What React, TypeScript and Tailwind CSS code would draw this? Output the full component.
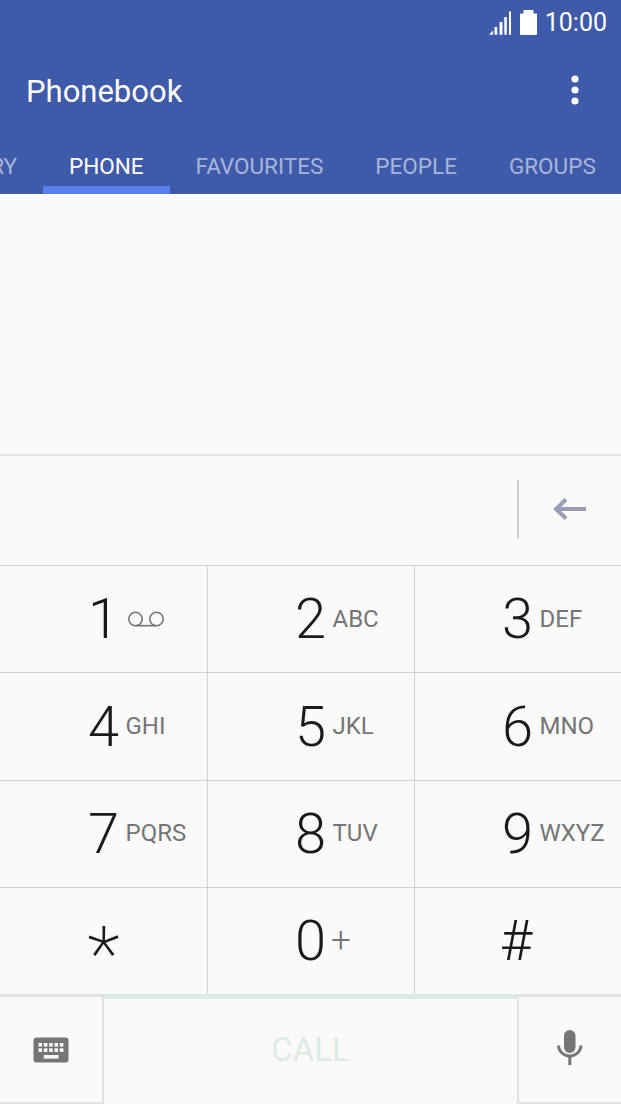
import React from "react";

const keys = [
  { digit: "1", sub: "" },
  { digit: "2", sub: "ABC" },
  { digit: "3", sub: "DEF" },
  { digit: "4", sub: "GHI" },
  { digit: "5", sub: "JKL" },
  { digit: "6", sub: "MNO" },
  { digit: "7", sub: "PQRS" },
  { digit: "8", sub: "TUV" },
  { digit: "9", sub: "WXYZ" },
];

const tabs = [
  { name: "HISTORY", active: false },
  { name: "PHONE", active: true },
  { name: "FAVOURITES", active: false },
  { name: "PEOPLE", active: false },
  { name: "GROUPS", active: false },
];

const Voicemail = () => (
  <svg width="36" height="16" viewBox="0 0 36 16" fill="none" stroke="#757575" strokeWidth="1.6">
    <circle cx="7.500" cy="8" r="6.700" />
    <circle cx="28.500" cy="8" r="6.700" />
    <path d="M7.500 14.700h21" />
  </svg>
);

const Signal = () => (
  <svg width="23" height="24" viewBox="0 0 23 24" fill="white">
    <path d="M0 23.700l4-4.200v4.200z" />
    <rect x="5.500" y="16" width="2.700" height="7.700" />
    <rect x="10.500" y="11" width="3" height="12.700" />
    <rect x="15.300" y="6" width="2.500" height="17.700" />
    <rect x="20" y="0.500" width="2" height="23.200" />
  </svg>
);

const Battery = () => (
  <svg width="17" height="25" viewBox="0 0 17 25" fill="white">
    <path d="M3.500 0h10v3.500h2.500a1 1 0 0 1 1 1V24a1 1 0 0 1-1 1H1a1 1 0 0 1-1-1V4.500a1 1 0 0 1 1-1h2.500z" />
  </svg>
);

const Dots = () => (
  <svg width="8" height="30" viewBox="0 0 8 30" fill="white" className="mb-[2px]">
    <circle cx="4" cy="4" r="3.600" />
    <circle cx="4" cy="15" r="3.600" />
    <circle cx="4" cy="26" r="3.600" />
  </svg>
);

const KeyboardIcon = () => (
  <svg width="36" height="26" viewBox="0 0 36 26">
    <rect x="0.500" y="0.500" width="35" height="25" rx="3" fill="#757575" />
    {[0, 1].map((row) =>
      [0, 1, 2, 3, 4].map((col) => (
        <rect
          key={`${row}-${col}`}
          x={5.5 + col * 5.33}
          y={6 + row * 5.33}
          width="3.600"
          height="3.600"
          fill="#fafafa"
        />
      ))
    )}
    <rect x="10.800" y="18" width="14.700" height="3.600" fill="#fafafa" />
  </svg>
);

const Mic = () => (
  <svg width="28" height="36" viewBox="0 0 28 36" fill="#757575" className="mb-[3px]">
    <rect x="8" y="0" width="11.500" height="23" rx="5.750" />
    <path d="M1 15.500h3c.4 5.500 4.400 9 9.750 9s9.350-3.500 9.750-9h3c-.4 6.700-5.200 11-11.200 11.900V35h-3v-7.600C6.200 26.500 1.400 22.200 1 15.500z" />
  </svg>
);

export default function App() {
  return (
    <div className="w-[621px] h-[1104px] overflow-hidden bg-[#fafafa] flex flex-col font-['Roboto',sans-serif]">
      {/* App bar */}
      <div className="h-[194px] shrink-0 bg-[#3f5aa8] flex flex-col text-white">
        <div className="h-[44px] flex items-center justify-end gap-[8px] pr-[14px] pt-[1px]">
          <Signal />
          <Battery />
          <span className="text-[25px] leading-none font-normal">10:00</span>
        </div>
        <div className="h-[92px] flex items-center justify-between pl-[26px] pr-[42px] pt-[2px]">
          <span className="text-[31px] leading-none">Phonebook</span>
          <Dots />
        </div>
        <div className="flex-1 flex overflow-hidden ml-[-100px]">
          {tabs.map((t) => (
            <div
              key={t.name}
              className={`shrink-0 px-[26px] pt-[12px] flex items-center justify-center text-[22.500px] border-b-[8px] ${
                t.active ? "text-white border-[#5a7ff0]" : "text-[#a7b5dc] border-transparent"
              }`}
            >
              {t.name}
            </div>
          ))}
        </div>
      </div>

      {/* Log area */}
      <div className="h-[262px] shrink-0 border-b-2 border-[#e4e4e4]" />

      {/* Number field */}
      <div className="h-[109px] shrink-0 flex items-center justify-end pb-[2px]">
        <div className="w-[2px] h-[59px] bg-[#d0d0d0]" />
        <div className="w-[102px] flex items-center justify-center pb-[2px]">
          <svg width="34" height="24" viewBox="0 0 34 24" fill="none" stroke="#9a9db5" strokeWidth="4">
            <path d="M33 12H3M13 2.500L3 12l10 9.500" />
          </svg>
        </div>
      </div>

      {/* Keypad */}
      <div className="grid grid-cols-[208px_207px_206px] grid-rows-[107px_108px_107px_106px] border-t border-[#d2d2d2] h-[429px] shrink-0">
        {keys.map((k, i) => (
          <div
            key={k.digit}
            className={`flex items-center border-b border-[#d2d2d2] ${i % 3 !== 2 ? "border-r" : ""}`}
          >
            <span className={`text-right text-[56px] font-light leading-none text-[#1a1a1a] ${i % 3 === 0 ? "w-[119px]" : "w-[118px]"}`}>
              {k.digit}
            </span>
            <span className={`ml-[6.500px] text-[24px] leading-none text-[#757575] ${i < 3 ? "" : "pb-[2px]"}`}>
              {k.sub || (
                <span className="block ml-[2.500px]">
                  <Voicemail />
                </span>
              )}
            </span>
          </div>
        ))}
        <div className="flex items-center justify-center border-r border-[#d2d2d2]">
          <span className="text-[76px] font-extralight leading-none text-[#1a1a1a] translate-y-[13px]">*</span>
        </div>
        <div className="flex items-center border-r border-[#d2d2d2]">
          <span className="w-[118px] text-right text-[56px] font-light leading-none text-[#1a1a1a]">0</span>
          <span className="ml-[5px] pb-[2px] text-[35px] font-light leading-none text-[#757575]">+</span>
        </div>
        <div className="flex items-center justify-center pr-[4px]">
          <span className="text-[56px] font-light leading-none text-[#1a1a1a]">#</span>
        </div>
      </div>

      {/* Bottom actions */}
      <div className="flex-1 flex">
        <div className="w-[104px] flex items-center justify-center border-t-[3px] border-r-2 border-b-2 border-[#e2e2e2]">
          <KeyboardIcon />
        </div>
        <div className="flex-1 border-t-[5px] border-[#dcece4] pb-[3px] flex items-center justify-center text-[33px] text-[#dcece4]">
          CALL
        </div>
        <div className="w-[104px] flex items-center justify-center border-t-[3px] border-l-2 border-b-2 border-[#e2e2e2]">
          <Mic />
        </div>
      </div>
    </div>
  );
}
